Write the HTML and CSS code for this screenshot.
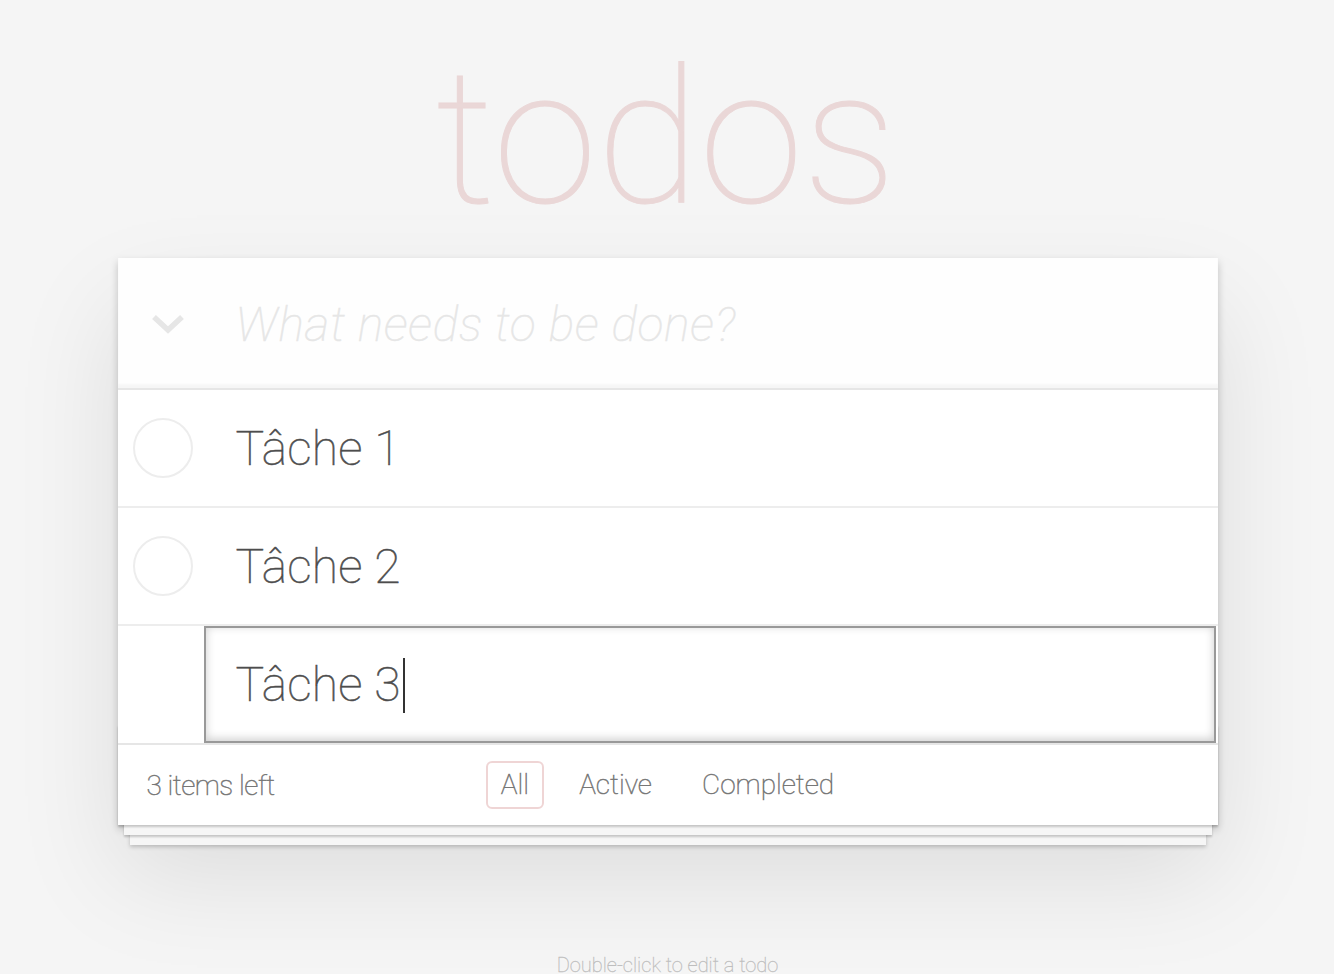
FILE: index.html
```html
<!DOCTYPE html>
<html lang="fr">
<head>
<meta charset="utf-8">
<title>todos</title>
<link rel="stylesheet" href="styles.css">
</head>
<body>
<div class="page">
  <h1 class="title">todos</h1>
  <section class="todoapp">
    <header class="new-row">
      <span class="toggle-all">
        <svg width="34" height="22" viewBox="0 0 34 22"><polyline points="3,4 17,17 31,4" fill="none" stroke="#e6e6e6" stroke-width="5.5" stroke-linejoin="miter"/></svg>
      </span>
      <span class="placeholder">What needs to be done?</span>
    </header>
    <ul class="todo-list">
      <li class="todo">
        <span class="circle"></span>
        <span class="label">Tâche 1</span>
      </li>
      <li class="todo">
        <span class="circle"></span>
        <span class="label">Tâche 2</span>
      </li>
      <li class="todo editing">
        <div class="edit">Tâche 3<span class="caret"></span></div>
      </li>
    </ul>
    <footer class="footer">
      <span class="count">3 items left</span>
      <ul class="filters">
        <li><a class="selected">All</a></li>
        <li><a>Active</a></li>
        <li><a>Completed</a></li>
      </ul>
    </footer>
  </section>
  <p class="info">Double-click to edit a todo</p>
</div>
</body>
</html>
```
FILE: styles.css
```css
html, body {
  margin: 0;
  padding: 0;
}
body {
  background: #f5f5f5;
  color: #4d4d4d;
  font-family: Roboto, "Helvetica Neue", "Liberation Sans", sans-serif;
  font-weight: 100;
  font-size: 28px;
  -webkit-text-stroke-width: 0.5px;
}
.page {
  max-width: 1100px;
  margin: 0 auto;
  padding-left: 1px;
}
.title {
  margin: 0;
  padding: 38px 3px 0 0;
  height: 202px;
  line-height: 200px;
  font-size: 188px;
  font-weight: 100;
  text-align: center;
  color: #ead7d7;
  -webkit-text-stroke-width: 1px;
}
.todoapp {
  background: #fff;
  margin-top: 18px;
  position: relative;
  box-shadow: 0 4px 8px 0 rgba(0, 0, 0, 0.2), 0 50px 100px 0 rgba(0, 0, 0, 0.1);
}
.new-row {
  height: 130px;
  display: flex;
  align-items: center;
  background: rgba(0, 0, 0, 0.003);
  box-shadow: inset 0 -4px 2px rgba(0, 0, 0, 0.03);
  border-bottom: 2px solid #e6e6e6;
}
.toggle-all {
  width: 120px;
  display: flex;
  justify-content: center;
  margin-top: 2px;
}
.toggle-all svg {
  display: block;
  margin-left: -20px;
}
.placeholder {
  font-size: 48px;
  font-style: italic;
  color: #e6e6e6;
  letter-spacing: 0.8px;
  margin-left: -2px;
  margin-top: 2px;
}
.todo-list {
  list-style: none;
  margin: 0;
  padding: 0;
}
.todo {
  display: flex;
  align-items: center;
  height: 116px;
  border-bottom: 2px solid #ededed;
}
.circle {
  width: 60px;
  height: 60px;
  border: 2px solid #ededed;
  border-radius: 50%;
  margin-left: 15px;
  box-sizing: border-box;
  flex: none;
}
.label {
  font-size: 48px;
  margin-left: 43px;
  margin-top: 2px;
  line-height: 56px;
  color: #4d4d4d;
  letter-spacing: 0.2px;
}
.todo.editing {
  height: auto;
  border-bottom: none;
  display: block;
}
.edit {
  margin-left: 86px;
  width: 1012px;
  height: 117px;
  box-sizing: border-box;
  border: 2px solid #999;
  box-shadow: inset 0 -2px 10px 0 rgba(0, 0, 0, 0.2);
  padding: 0 30px;
  font-size: 48px;
  letter-spacing: 0.2px;
  display: flex;
  align-items: center;
  color: #4d4d4d;
}
.caret {
  display: inline-block;
  width: 2px;
  height: 55px;
  background: #333;
  margin-left: 2px;
  margin-top: 2px;
}
.footer {
  position: relative;
  color: #777;
  height: 82px;
  box-sizing: border-box;
  padding: 0 29px;
  border-top: 2px solid #e6e6e6;
  display: flex;
  align-items: center;
  font-size: 28px;
}
.footer::before {
  content: "";
  position: absolute;
  right: 0;
  bottom: 0;
  left: 0;
  height: 100px;
  overflow: hidden;
  box-shadow: 0 2px 2px rgba(0, 0, 0, 0.2),
    0 16px 0 -6px #f6f6f6,
    0 18px 2px -6px rgba(0, 0, 0, 0.2),
    0 32px 0 -12px #f6f6f6,
    0 34px 4px -12px rgba(0, 0, 0, 0.2);
}
.count {
  position: relative;
  flex: 1;
  letter-spacing: -0.5px;
}
.filters {
  position: absolute;
  left: 0;
  right: 0;
  top: 0;
  bottom: 0;
  margin: 0;
  padding: 0;
  list-style: none;
  display: flex;
  justify-content: center;
  align-items: center;
  gap: 8px;
}
.filters a {
  display: block;
  margin: 0 6px;
  padding: 4px 13px;
  border: 2px solid transparent;
  border-radius: 6px;
  line-height: 36px;
  color: #777;
}
.filters a.selected {
  border-color: rgba(175, 47, 47, 0.2);
}
.info {
  margin: 130px 0 0;
  color: #bfbfbf;
  font-size: 20px;
  line-height: 20px;
  text-align: center;
  -webkit-text-stroke-width: 0.3px;
  text-shadow: 0 2px 0 rgba(255, 255, 255, 0.5);
}
```
